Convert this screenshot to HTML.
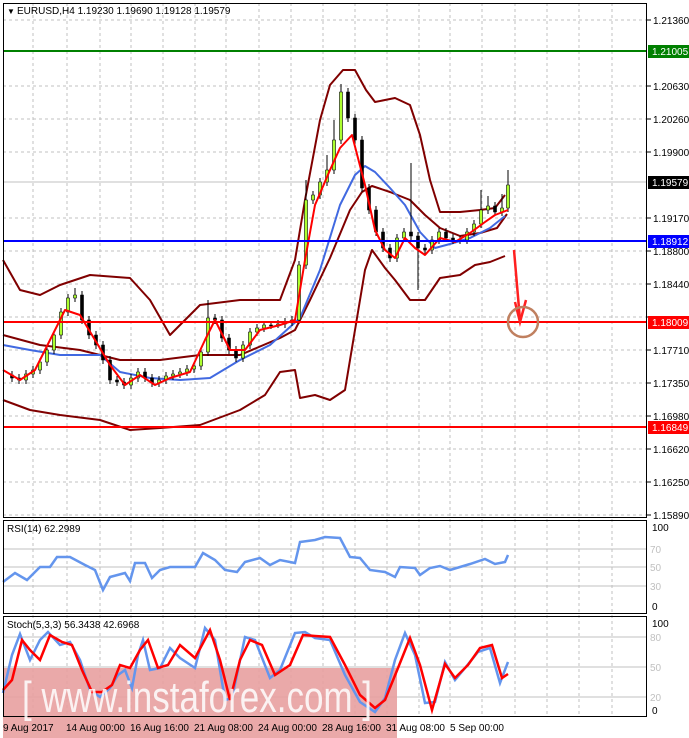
<!DOCTYPE html>
<html><head><meta charset="utf-8"><style>
body{margin:0;background:#fff;width:689px;height:738px;overflow:hidden;font-family:"Liberation Sans",sans-serif}
svg{position:absolute;left:0;top:0}
text{font-family:"Liberation Sans",sans-serif}
</style></head><body>
<svg width="689" height="738" viewBox="0 0 689 738" font-size="10">
<rect width="689" height="738" fill="#fff"/>
<g stroke="#c0c0c0" stroke-dasharray="3,3" stroke-width="1">
<path d="M33 3V717M67 3V717M100 3V717M131 3V717M163 3V717M195 3V717M226 3V717M259 3V717M291 3V717M323 3V717M355 3V717M387 3V717M419 3V717M450 3V717M482 3V717M515 3V717M547 3V717M579 3V717M612 3V717"/>
<path d="M3 20H647M3 86H647M3 119H647M3 152H647M3 218H647M3 251H647M3 284H647M3 317H647M3 350H647M3 383H647M3 416H647M3 449H647M3 482H647M3 515H647"/>
</g>
<path d="M3 549H647M3 567H647M3 586H647M3 637H647M3 667H647M3 697H647" stroke="#c0c0c0"/>
<path d="M3 182H647" stroke="#c0c0c0"/>
<rect x="3" y="668" width="394" height="70" fill="#e8a0a0" opacity="0.9"/>
<g fill="none" stroke-width="2" stroke-linejoin="round">
<polyline stroke="#800000" points="3,260 20,290 40,295 60,285 90,275 130,278 150,300 170,335 185,320 200,305 240,300 280,300 295,260 305,200 320,120 330,85 343,70 355,70 366,90 375,102 385,100 395,98 410,105 420,135 430,180 440,212 460,212 480,210 495,208 505,195"/>
<polyline stroke="#800000" points="3,400 30,410 60,415 100,420 130,430 160,428 200,425 240,410 265,395 280,372 295,370 300,398 315,395 330,400 345,390 355,330 365,270 372,250 385,268 395,280 410,300 425,300 440,278 460,275 475,265 490,262 505,256"/>
<polyline stroke="#800000" points="3,335 40,345 80,350 120,360 160,360 200,355 240,355 280,338 295,330 310,300 330,258 350,210 362,192 372,186 390,192 410,200 425,215 440,228 460,236 480,233 497,228 507,214"/>
<polyline stroke="#4169e1" points="3,345 30,350 60,355 100,355 120,372 150,378 180,380 210,378 240,360 270,345 300,318 320,270 340,205 355,175 365,166 375,172 390,188 405,205 420,232 435,248 450,244 470,238 490,228 505,216"/>
</g>
<path stroke="#000" stroke-width="1" fill="none" d="M12 371V382M19 374V384M26 370V384M33 366V378M40 358V374M47 346V366M54 331V354M61 308V339M68 294V316M75 288V302M82 291V324M89 316V339M96 331V349M103 341V364M110 356V384M117 376V386M124 378V389M131 374V389M138 368V382M145 368V382M152 374V387M159 376V387M166 372V384M173 370V380M180 368V378M187 365V376M194 362V373M201 348V370M208 300V356M215 314V324M222 316V342M229 334V354M236 346V362M243 341V362M250 328V349M257 324V336M264 321V332M271 321V329M278 320V328M285 318V328M292 316V326M299 261V324M306 180V269M313 191V204M320 178V199M327 155V186M334 120V174M341 84V144M348 88V122M355 114V144M362 136V192M369 184V214M376 206V236M383 228V252M390 244V262M397 234V262M404 228V242M411 163V240M418 232V290M425 244V254M432 236V254M439 228V244M446 228V242M453 234V244M460 236V244M467 228V244M474 220V236M481 190V228M488 196V214M495 202V216M502 194V216M508 170V212"/>
<path fill="#adff2f" stroke="#000" stroke-width="0.6" d="M24.5 374h3v6h-3zM31.5 370h3v4h-3zM38.5 362h3v8h-3zM45.5 350h3v12h-3zM52.5 335h3v15h-3zM59.5 312h3v23h-3zM66.5 298h3v14h-3zM73.5 295h3v3h-3zM129.5 378h3v7h-3zM136.5 372h3v6h-3zM157.5 380h3v3h-3zM164.5 376h3v4h-3zM171.5 374h3v2h-3zM178.5 372h3v2h-3zM185.5 369h3v3h-3zM192.5 366h3v3h-3zM199.5 352h3v14h-3zM206.5 318h3v34h-3zM241.5 345h3v13h-3zM248.5 332h3v13h-3zM255.5 328h3v4h-3zM262.5 325h3v3h-3zM276.5 324h3v2h-3zM283.5 322h3v2h-3zM290.5 320h3v2h-3zM297.5 265h3v55h-3zM304.5 200h3v65h-3zM311.5 195h3v5h-3zM318.5 182h3v13h-3zM325.5 170h3v12h-3zM332.5 140h3v30h-3zM339.5 92h3v48h-3zM395.5 238h3v20h-3zM402.5 232h3v6h-3zM430.5 240h3v10h-3zM437.5 232h3v8h-3zM465.5 232h3v8h-3zM472.5 224h3v8h-3zM479.5 210h3v14h-3zM486.5 206h3v4h-3zM500.5 208h3v4h-3zM506.5 185h3v23h-3z"/>
<path fill="#000" stroke="#000" stroke-width="0.6" d="M10.5 375h3v3h-3zM17.5 378h3v2h-3zM80.5 295h3v25h-3zM87.5 320h3v15h-3zM94.5 335h3v10h-3zM101.5 345h3v15h-3zM108.5 360h3v20h-3zM115.5 380h3v2h-3zM122.5 382h3v3h-3zM143.5 372h3v6h-3zM150.5 378h3v5h-3zM213.5 318h3v2h-3zM220.5 320h3v18h-3zM227.5 338h3v12h-3zM234.5 350h3v8h-3zM269.5 325h3v1h-3zM346.5 92h3v26h-3zM353.5 118h3v22h-3zM360.5 140h3v48h-3zM367.5 188h3v22h-3zM374.5 210h3v22h-3zM381.5 232h3v16h-3zM388.5 248h3v10h-3zM409.5 232h3v4h-3zM416.5 236h3v12h-3zM423.5 248h3v2h-3zM444.5 232h3v6h-3zM451.5 238h3v2h-3zM458.5 240h3v1h-3zM493.5 206h3v6h-3z"/>
<polyline fill="none" stroke="#ff0000" stroke-width="2" stroke-linejoin="round" points="3,370 20,380 35,370 50,340 65,310 80,315 95,340 110,365 125,385 140,375 155,385 170,378 190,372 205,340 215,320 230,350 245,350 260,330 280,325 295,320 305,260 315,205 330,170 340,148 352,135 365,185 375,230 385,250 395,258 405,238 415,248 425,255 440,238 455,242 470,233 485,222 495,215 508,210"/>
<path d="M3 51H647" stroke="#008000" stroke-width="2"/>
<path d="M3 241H647" stroke="#0000ff" stroke-width="2"/>
<path d="M3 322H647" stroke="#ff0000" stroke-width="2"/>
<path d="M3 427H647" stroke="#ff0000" stroke-width="2"/>
<path d="M514 250 L520 320" stroke="#ff2020" stroke-width="2.5" fill="none"/>
<path d="M515 302 L520 322 L526 300" stroke="#ff2020" stroke-width="2.5" fill="none"/>
<circle cx="523" cy="322" r="15" fill="none" stroke="#c08060" stroke-width="2.5"/>
<polyline fill="none" stroke="#6495ed" stroke-width="2.5" points="3,582 15,573 27,580 40,567 50,567 57,557 70,557 85,565 95,570 103,590 110,577 125,573 130,581 135,563 145,563 152,578 160,570 170,567 195,567 203,553 215,560 225,570 237,572 245,562 260,558 270,565 280,560 295,563 300,542 315,540 325,537 340,538 350,557 360,558 370,570 385,572 395,577 400,567 415,568 420,575 430,568 440,566 450,570 460,567 470,564 485,559 495,564 505,562 508,555"/>
<polyline fill="none" stroke="#6495ed" stroke-width="2.5" points="3,693 12,655 20,634 30,660 40,640 48,632 60,645 70,642 80,660 90,690 100,697 110,688 118,675 125,670 132,688 138,655 143,640 150,670 160,668 170,648 180,658 195,668 205,628 215,640 225,700 232,698 245,637 255,640 270,678 280,670 295,633 305,632 315,638 330,640 345,675 360,702 375,712 385,698 395,660 405,633 415,655 425,703 435,702 445,662 455,680 465,668 478,652 490,648 500,683 508,662"/>
<polyline fill="none" stroke="#ff0000" stroke-width="2.5" points="3,690 12,680 22,640 30,650 40,660 50,635 62,642 72,645 82,670 92,692 102,692 112,685 120,665 130,668 140,650 148,640 158,668 168,665 180,645 195,658 210,630 220,660 230,700 240,660 250,640 262,645 275,675 290,665 303,635 315,636 330,637 345,665 360,695 375,708 385,700 398,668 410,638 420,665 432,710 445,664 455,678 468,665 480,648 492,645 502,678 508,674"/>
<g fill="none" stroke="#000" stroke-width="1">
<rect x="3.5" y="3.5" width="643" height="514"/>
<rect x="3.5" y="520.5" width="643" height="93"/>
<rect x="3.5" y="616.5" width="643" height="100"/>
</g>
<g stroke="#000"><path d="M647 20h4M647 86h4M647 119h4M647 152h4M647 218h4M647 251h4M647 284h4M647 317h4M647 350h4M647 383h4M647 416h4M647 449h4M647 482h4M647 515h4"/></g>
<text x="7" y="14" font-size="8">▼</text>
<text x="17" y="14">EURUSD,H4  1.19230 1.19690 1.19128 1.19579</text>
<g fill="#000">
<text x="653" y="24">1.21360</text><text x="653" y="90">1.20630</text><text x="653" y="123">1.20260</text><text x="653" y="156">1.19900</text><text x="653" y="222">1.19170</text><text x="653" y="255">1.18800</text><text x="653" y="288">1.18440</text><text x="653" y="354">1.17710</text><text x="653" y="387">1.17350</text><text x="653" y="420">1.16980</text><text x="653" y="453">1.16620</text><text x="653" y="486">1.16250</text><text x="653" y="519">1.15890</text>
</g>
<rect x="648" y="45" width="41" height="13" fill="#008000"/><text x="652" y="55" fill="#fff">1.21005</text>
<rect x="648" y="176" width="41" height="13" fill="#000"/><text x="652" y="186" fill="#fff">1.19579</text>
<rect x="648" y="235" width="41" height="13" fill="#0000ff"/><text x="652" y="245" fill="#fff">1.18912</text>
<rect x="648" y="316" width="41" height="13" fill="#ff0000"/><text x="652" y="326" fill="#fff">1.18009</text>
<rect x="648" y="421" width="41" height="13" fill="#ff0000"/><text x="652" y="431" fill="#fff">1.16849</text>
<text x="7" y="532">RSI(14) 62.2989</text>
<text x="652" y="531">100</text><text x="650" y="553" fill="#c0c0c0">70</text><text x="650" y="571" fill="#c0c0c0">50</text><text x="650" y="590" fill="#c0c0c0">30</text><text x="652" y="610">0</text>
<text x="7" y="628">Stoch(5,3,3) 56.3438 42.6968</text>
<text x="652" y="627">100</text><text x="650" y="641" fill="#c0c0c0">80</text><text x="650" y="671" fill="#c0c0c0">50</text><text x="650" y="701" fill="#c0c0c0">20</text><text x="652" y="714">0</text>
<text x="3" y="731">9 Aug 2017</text><text x="66" y="731">14 Aug 00:00</text><text x="130" y="731">16 Aug 16:00</text><text x="194" y="731">21 Aug 08:00</text><text x="258" y="731">24 Aug 00:00</text><text x="322" y="731">28 Aug 16:00</text><text x="386" y="731">31 Aug 08:00</text><text x="450" y="731">5 Sep 00:00</text>
<text x="22" y="712" fill="#fff" opacity="0.85" style="font-size:44px" textLength="350" lengthAdjust="spacingAndGlyphs">[ www.instaforex.com ]</text>
</svg>
</body></html>
